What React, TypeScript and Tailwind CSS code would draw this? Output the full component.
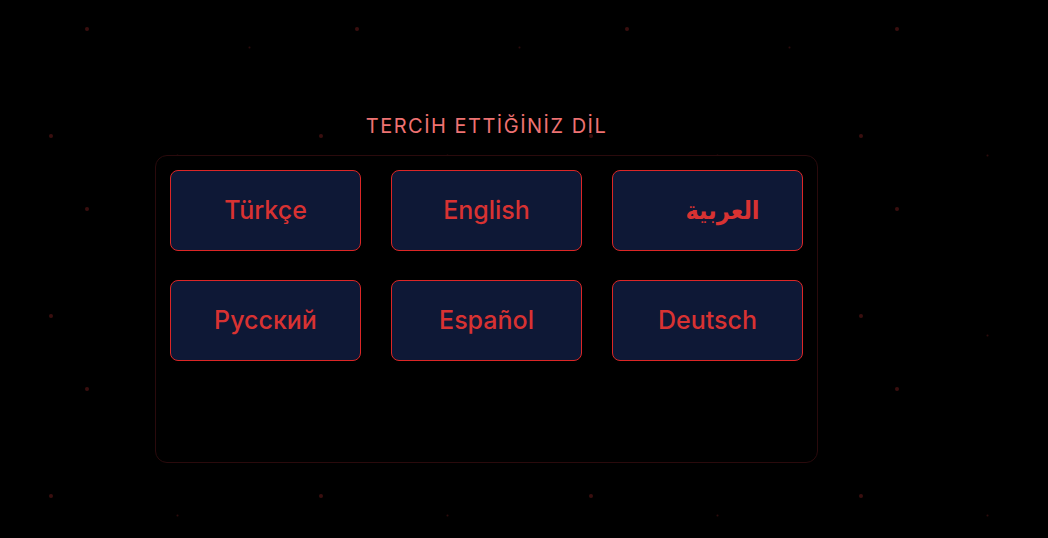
import React from "react";

const languages = [
  { code: "tr", label: "Türkçe" },
  { code: "en", label: "English" },
  { code: "ar", label: "العربية" },
  { code: "ru", label: "Русский" },
  { code: "es", label: "Español" },
  { code: "de", label: "Deutsch" },
];

// faint red dots behind the whole page
const DotField = () => (
  <svg className="absolute inset-0 h-full w-full" aria-hidden="true">
    <defs>
      <pattern id="dots" width="270" height="180" patternUnits="userSpaceOnUse">
        <circle cx="87" cy="29" r="2" fill="#3a0e0e" />
        <circle cx="51" cy="136" r="2" fill="#3a0e0e" />
        <circle cx="249.5" cy="47.5" r="1" fill="#2e0b0b" />
        <circle cx="177.5" cy="155.5" r="1" fill="#2e0b0b" />
      </pattern>
    </defs>
    <rect width="100%" height="100%" fill="url(#dots)" />
  </svg>
);

export default function App() {
  return (
    <div
      className="relative h-[538px] w-full overflow-hidden bg-black"
      style={{ fontFamily: "Inter, 'DejaVu Sans', sans-serif" }}
    >
      <DotField />
      <div className="relative ml-[155px] w-[663px] pt-[112px]">
        <h2 className="text-center text-[20px] leading-[28px] tracking-[1.5px] text-[#ee7272]">
          TERCİH ETTİĞİNİZ DİL
        </h2>
        <div className="mt-[15px] h-[308px] rounded-xl border border-[#2a0a0c] bg-black p-[14px]">
          <div className="grid grid-cols-3 gap-x-[30px] gap-y-[29px]">
            {languages.map((lang) => (
              <button
                key={lang.code}
                className="flex h-[81px] items-center justify-center rounded-lg border border-[#dc2626] bg-[#0e1836] text-[25px] font-medium text-[#d83232]"
              >
                {lang.code === "ar" ? (
                  <span
                    className="pl-[30px] font-['DejaVu_Sans_Condensed','DejaVu_Sans',sans-serif] font-bold"
                    dir="rtl"
                  >
                    {lang.label}
                  </span>
                ) : (
                  lang.label
                )}
              </button>
            ))}
          </div>
        </div>
      </div>
    </div>
  );
}
